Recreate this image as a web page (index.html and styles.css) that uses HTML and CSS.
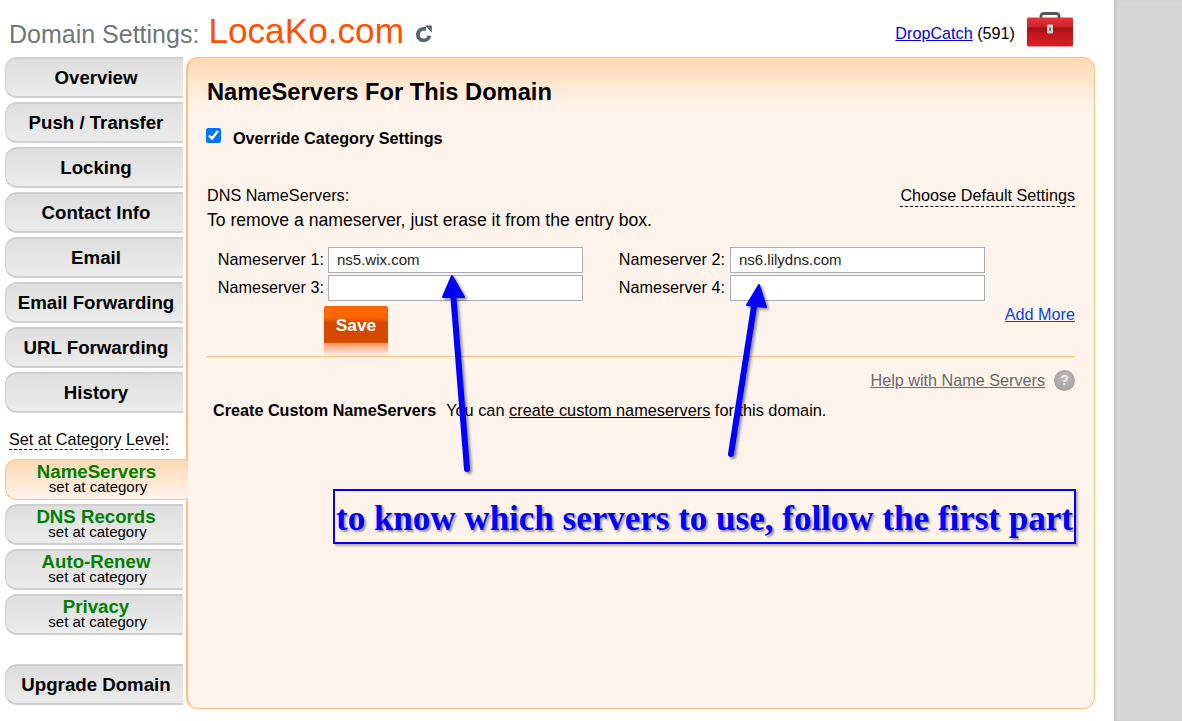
FILE: index.html
```html
<!DOCTYPE html>
<html lang="en">
<head>
<meta charset="utf-8">
<title>Domain Settings</title>
<link rel="stylesheet" href="styles.css">
</head>
<body>
<div class="page">
  <header class="top">
    <div class="title">
      <span class="title-label">Domain Settings:</span>
      <span class="title-domain">LocaKo.com</span>
      <svg class="refresh" viewBox="0 0 18 18" width="18" height="18" aria-hidden="true">
        <path d="M14.4 10.600A5.800 5.800 0 1 1 9 3.800h2" fill="none" stroke="#56676c" stroke-width="3.800"/>
        <path d="M10.200 0.600 16.800 0.600 16.800 7.800Z" fill="#56676c"/>
      </svg>
    </div>
    <div class="drop">
      <span class="drop-text"><a class="drop-link" href="#">DropCatch</a> (591)</span>
      <svg class="toolbox" viewBox="0 0 46 36" width="46" height="36" aria-hidden="true">
        <defs>
          <linearGradient id="boxg" x1="0" y1="0" x2="0" y2="1">
            <stop offset="0" stop-color="#e8363e"/>
            <stop offset=".33" stop-color="#cf1f27"/>
            <stop offset=".36" stop-color="#9c0f14"/>
            <stop offset=".52" stop-color="#bf161c"/>
            <stop offset="1" stop-color="#d81f26"/>
          </linearGradient>
        </defs>
        <path d="M14 7V4q0-2.500 3-2.500h12q3 0 3 2.500v3" fill="none" stroke="#55585b" stroke-width="2.800"/>
        <path d="M1 5.500h44q1 0 1 1v27q0 1-2 1H2q-2 0-2-1V6.500q0-1 1-1Z" fill="url(#boxg)"/>
        <rect x="20" y="12.500" width="6" height="9" rx="1" fill="#d3cfcf"/>
        <rect x="22" y="15.500" width="2" height="3.500" fill="#777"/>
      </svg>
    </div>
  </header>

  <div class="body-row">
    <nav class="side">
      <a class="tab" href="#">Overview</a>
      <a class="tab" href="#">Push / Transfer</a>
      <a class="tab" href="#">Locking</a>
      <a class="tab" href="#">Contact Info</a>
      <a class="tab" href="#">Email</a>
      <a class="tab" href="#">Email Forwarding</a>
      <a class="tab" href="#">URL Forwarding</a>
      <a class="tab" href="#">History</a>
      <div class="side-label"><span>Set at Category Level:</span></div>
      <a class="tab tab-cat tab-active" href="#"><b>NameServers</b><small>set at category</small></a>
      <a class="tab tab-cat" href="#"><b>DNS Records</b><small>set at category</small></a>
      <a class="tab tab-cat" href="#"><b>Auto-Renew</b><small>set at category</small></a>
      <a class="tab tab-cat" href="#"><b>Privacy</b><small>set at category</small></a>
      <a class="tab tab-last" href="#">Upgrade Domain</a>
    </nav>

    <main class="panel">
      <h1 class="panel-title">NameServers For This Domain</h1>
      <label class="override"><input type="checkbox" checked><span>Override Category Settings</span></label>

      <div class="dns-head">
        <div class="dns-text">
          <div>DNS NameServers:</div>
          <div class="dns-hint">To remove a nameserver, just erase it from the entry box.</div>
        </div>
        <a class="defaults" href="#">Choose Default Settings</a>
      </div>

      <div class="ns-grid">
        <label class="ns-label">Nameserver 1:</label><input class="ns-input" type="text" value="ns5.wix.com">
        <label class="ns-label">Nameserver 2:</label><input class="ns-input" type="text" value="ns6.lilydns.com">
        <label class="ns-label">Nameserver 3:</label><input class="ns-input" type="text">
        <label class="ns-label">Nameserver 4:</label><input class="ns-input" type="text">
      </div>

      <div class="actions">
        <button class="save" type="button">Save</button>
        <a class="add-more" href="#">Add More</a>
      </div>
      <div class="rule"></div>

      <div class="help-row">
        <a class="help-link" href="#">Help with Name Servers</a>
        <span class="help-icon">?</span>
      </div>

      <p class="custom"><b>Create Custom NameServers</b><span class="custom-text">You can <a href="#">create custom nameservers</a> for this domain.</span></p>
    </main>
  </div>

  <svg class="arrows" viewBox="0 0 1182 721" width="1182" height="721" aria-hidden="true">
    <defs>
      <filter id="ash" x="-50%" y="-10%" width="200%" height="120%">
        <feDropShadow dx="2" dy="2" stdDeviation="1.500" flood-color="#000" flood-opacity=".45"/>
      </filter>
    </defs>
    <g filter="url(#ash)">
      <path d="M467 469 453 292" stroke="#0000ff" stroke-width="6" stroke-linecap="round" fill="none"/>
      <path d="M452 276 443 297 464 297Z" fill="#0000ff" stroke="#0000ff" stroke-width="2" stroke-linejoin="round"/>
    </g>
    <g filter="url(#ash)">
      <path d="M731 454 755 300" stroke="#0000ff" stroke-width="6" stroke-linecap="round" fill="none"/>
      <path d="M759 285 747 305 766 307Z" fill="#0000ff" stroke="#0000ff" stroke-width="2" stroke-linejoin="round"/>
    </g>
  </svg>
  <div class="note">to know which servers to use, follow the first part</div>
</div>
<div class="gutter"></div>
</body>
</html>
```
FILE: styles.css
```css
* { box-sizing: border-box; }
html, body { margin: 0; height: 721px; overflow: hidden; }
body {
  display: flex;
  font-family: "Liberation Sans", Arial, sans-serif;
  font-size: 16.2px;
  color: #000;
  background: #fff;
}
a { color: inherit; }

.page { position: relative; width: 1114px; height: 721px; flex: none; background: #fff; }
.gutter { flex: 1; background: #d6d6d6; box-shadow: inset 3px 0 3px -1px #c2c4c8; }

.top {
  height: 57px;
  display: flex;
  justify-content: space-between;
  align-items: flex-start;
  padding: 0 41px 0 9px;
}
.title { display: flex; align-items: baseline; margin-top: 9px; }
.title-label { font-size: 25px; color: #6f7779; }
.title-domain { font-size: 35.2px; color: #fe5000; margin-left: 9px; line-height: 43px; }
.refresh { margin-left: 11px; align-self: center; margin-top: 6px; }
.drop { display: flex; align-items: center; margin-top: 12px; height: 36px; }
.drop-text { margin-top: 6px; white-space: pre; }
.drop-link { color: #0000ee; }
.toolbox { margin-left: 12px; }

.body-row { display: flex; height: 652px; align-items: flex-start; }

.side { width: 181px; margin-left: 5px; flex: none; display: flex; flex-direction: column; gap: 4px; position: relative; z-index: 1; }
.tab {
  display: flex;
  flex-direction: column;
  align-items: center;
  justify-content: center;
  height: 41px;
  width: 178px;
  border: 1px solid #cfcfcf;
  border-right: 0;
  border-top-width: 2px;
  border-bottom-width: 2px;
  border-radius: 12px 0 0 12px;
  background: linear-gradient(#dedede, #ececec);
  font-size: 18.67px;
  font-weight: bold;
  color: #000;
  text-decoration: none;
  padding: 0 0 0 3px;
}
.tab-cat { line-height: 15px; padding-bottom: 2px; }
.tab-cat b { color: #008000; font-size: 18.67px; line-height: 15px; }
.tab-cat small { font-size: 15px; font-weight: normal; line-height: 15px; padding-left: 3px; }
.tab-active {
  width: 183px;
  border: 1px solid #fdbf80;
  border-right: 0;
  padding: 0 1px 2px 0;
  background: linear-gradient(#fed9b3, #fff4ec);
}
.side-label { height: 38px; padding: 13px 0 0 4px; line-height: 18px; }
.side-label span { display: inline-block; border-bottom: 1px dashed #000; line-height: 19px; }
.tab-last { margin-top: 25px; }

.panel {
  width: 909px;
  height: 652px;
  flex: none;
  border: 1px solid #fdbf80;
  border-left-width: 2px;
  border-radius: 12px;
  background: linear-gradient(#fed9b3 0, #fff4ec 50px);
  padding: 0 19px;
}
.panel-title { margin: 19px 0 0; font-size: 23.7px; line-height: 30px; font-weight: bold; }
.override { display: flex; align-items: flex-start; margin-top: 20px; font-weight: bold; }
.override input { width: 15px; height: 15px; margin: 1px 0 0 -1px; accent-color: #0075ff; }
.override span { margin-left: 12px; line-height: 19px; margin-top: 2px; }

.dns-head { display: flex; justify-content: space-between; align-items: flex-start; margin-top: 37px; line-height: 24px; }
.defaults { color: #000; text-decoration: none; border-bottom: 1px dashed #000; line-height: 21px; }
.dns-text div:first-child { line-height: 19px; margin-top: 1px; }
.dns-text .dns-hint { line-height: 24px; font-size: 17.6px; margin-top: 3px; }

.ns-grid { display: grid; grid-template-columns: 117px 255px 139px 255px; column-gap: 4px; row-gap: 2px; margin-top: 15px; align-items: center; }
.ns-label { text-align: right; line-height: 24px; height: 26px; white-space: nowrap; }
.ns-label:nth-of-type(even) { padding-right: 1px; }
.ns-input {
  height: 26px;
  width: 255px;
  border: 1px solid #a5adb8;
  background: #fff;
  padding: 0 8px 2px;
  font: 15px "Liberation Sans", Arial, sans-serif;
  color: #222;
  border-radius: 0;
}

.actions { height: 55px; display: flex; justify-content: space-between; align-items: flex-start; }
.rule { height: 1px; background: #fdbf80; }
.save {
  margin: 5px 0 0 117px;
  width: 64px;
  height: 50px;
  border: 0;
  border-radius: 2px 2px 0 0;
  font: bold 17.33px "Liberation Sans", Arial, sans-serif;
  color: #fff;
  padding: 0 0 12px;
  background: linear-gradient(#ff6600 0, #ff6600 11px, #d54a00 17px, #d54a00 36px, #ea5a00 37px, #ff9a66 37.500px, #fff4ec 50px);
}
.add-more { color: #0044ee; margin-top: 4px; line-height: 19px; }

.help-row { display: flex; justify-content: flex-end; align-items: center; margin-top: 12px; height: 22px; }
.help-link { color: #6a6a6a; }
.help-icon {
  width: 21px;
  height: 21px;
  margin-left: 9px;
  border-radius: 50%;
  background: radial-gradient(circle at 50% 40%, #bbb, #999);
  color: #eee;
  font-size: 14px;
  font-weight: bold;
  text-align: center;
  line-height: 21px;
}
.custom { margin: 10px 0 0 6px; line-height: 19px; }
.custom-text { margin-left: 10px; font-size: 16.32px; }
.custom-text a { color: #000; }

.arrows { position: absolute; left: 0; top: 0; pointer-events: none; z-index: 2; overflow: visible; }
.note {
  position: absolute;
  left: 333px;
  top: 489px;
  width: 743px;
  height: 55px;
  z-index: 2;
  border: 2px solid #0000ff;
  box-shadow: 2px 2px 2px rgba(0,0,0,.3);
  font: bold 35px/55px "Liberation Serif", "Times New Roman", serif;
  color: #0000ff;
  text-shadow: 2px 2px 2px rgba(0,0,0,.4);
  white-space: nowrap;
  padding-left: 1px;
}
```
